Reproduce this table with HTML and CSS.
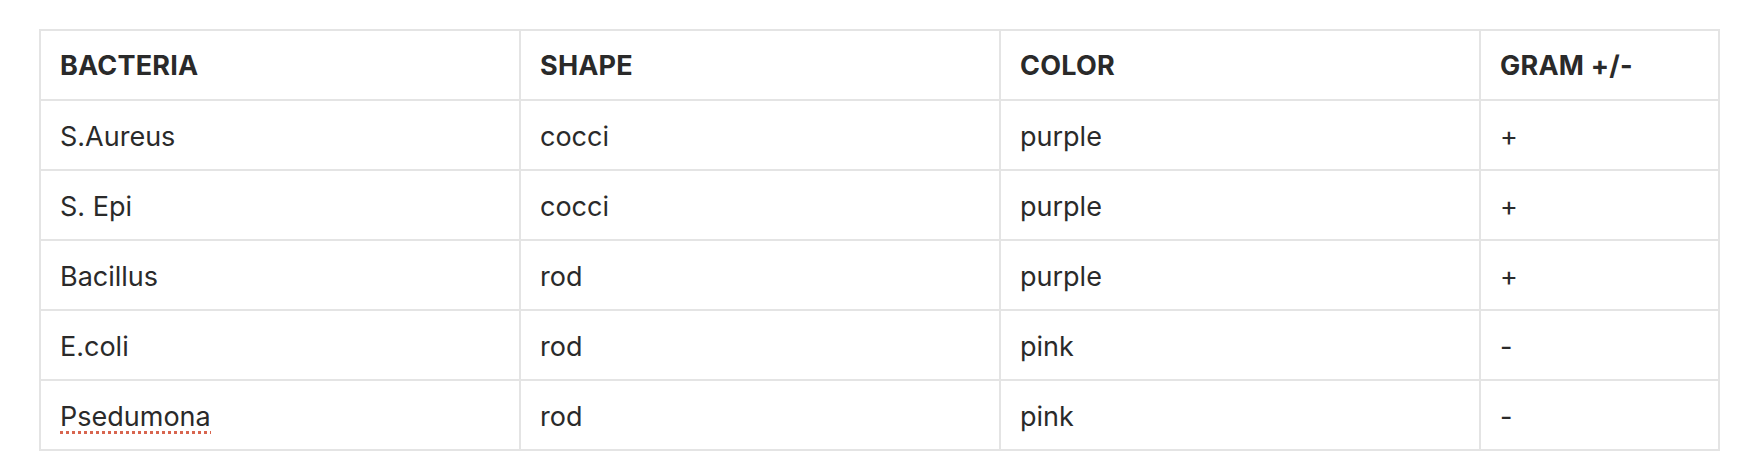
FILE: index.html
```html
<!DOCTYPE html>
<html lang="en">
<head>
<meta charset="utf-8">
<title>Bacteria</title>
<link rel="stylesheet" href="styles.css">
</head>
<body>
<div class="wrap">
  <table class="grid">
    <colgroup>
      <col class="c-wide"><col class="c-wide"><col class="c-wide"><col class="c-narrow">
    </colgroup>
    <thead>
      <tr><th>BACTERIA</th><th>SHAPE</th><th>COLOR</th><th>GRAM +/-</th></tr>
    </thead>
    <tbody>
      <tr><td>S.Aureus</td><td>cocci</td><td>purple</td><td>+</td></tr>
      <tr><td>S. Epi</td><td>cocci</td><td>purple</td><td>+</td></tr>
      <tr><td>Bacillus</td><td>rod</td><td>purple</td><td>+</td></tr>
      <tr><td>E.coli</td><td>rod</td><td>pink</td><td>-</td></tr>
      <tr><td><span class="spell">Psedumona</span></td><td>rod</td><td>pink</td><td>-</td></tr>
    </tbody>
  </table>
</div>
</body>
</html>
```
FILE: styles.css
```css
html, body {
  margin: 0;
  padding: 0;
  background: #ffffff;
}
.wrap {
  padding: 29px 0 0 39px;
}
.grid {
  border-collapse: collapse;
  table-layout: fixed;
  width: 1679px;
  font-family: Inter, "Noto Sans", sans-serif;
  font-size: 27px;
  color: #2a2a2a;
  border: 2px solid #e4e4e4;
}
.c-wide { width: 480px; }
.c-narrow { width: 239px; }
.grid th, .grid td {
  border: 2px solid #e4e4e4;
  height: 68px;
  padding: 0 18px 0 19px;
  text-align: left;
  vertical-align: middle;
  line-height: 1;
}
.grid th {
  font-weight: 700;
  letter-spacing: 0.2px;
}
.grid td {
  height: 65px;
  padding-top: 3px;
}
.spell {
  background-image: linear-gradient(to right, #d8654f 50%, transparent 50%);
  background-size: 6px 3px;
  background-repeat: repeat-x;
  background-position: 0 100%;
  padding-bottom: 1px;
}
```
